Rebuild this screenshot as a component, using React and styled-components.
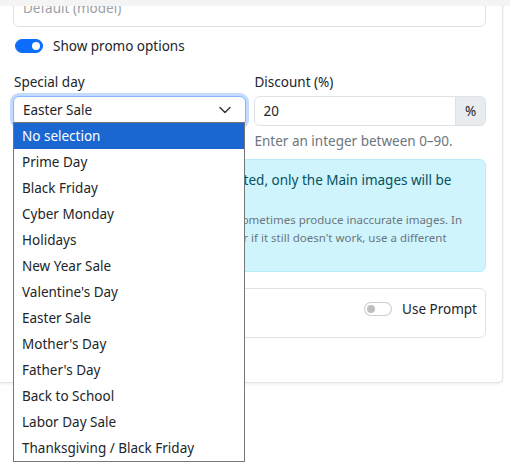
import React, { useState } from 'react'
import styled, { createGlobalStyle } from 'styled-components'

const GlobalStyle = createGlobalStyle`
	html, body { height: 100%; }
	body {
		margin: 0;
		background: #fff;
		font-family: 'Noto Sans', 'Noto Sans CJK KR', sans-serif;
		font-size: 13.5px;
		color: #212529;
		overflow: hidden;
	}
	#root { min-height: 100%; }
	* { box-sizing: border-box; }
`

const TopStrip = styled.div`
	position: fixed;
	top: 0;
	left: 0;
	right: 0;
	height: 6px;
	background: #f4f4f4;
	z-index: 5;
`

const Page = styled.div`
	min-height: 474px;
`

const Card = styled.div`
	width: 507px;
	margin-left: -4px;
	padding: 0 16px 44px;
	background: #fff;
	border: 1px solid #e3e3e3;
	border-top: none;
	border-radius: 0 0 5px 5px;
	box-shadow: 0 1px 3px rgba(0, 0, 0, 0.08);
	display: flex;
	flex-direction: column;
`

const TextInput = styled.input`
	width: 100%;
	height: 38px;
	padding: 0 9px;
	font: inherit;
	color: #212529;
	border: 1px solid #dee2e6;
	border-radius: 6px;
	margin-top: -11px;
	&::placeholder { color: #9aa0a6; }
`

const SwitchRow = styled.label`
	display: flex;
	align-items: center;
	gap: 10px;
	height: 20px;
	margin-top: ${p => p.$mt || 0}px;
	margin-left: ${p => p.$ml || 0}px;
	line-height: 20px;
	white-space: nowrap;
`

const Switch = styled.span`
	position: relative;
	width: 28px;
	height: 14px;
	border-radius: 7px;
	flex: none;
	background: ${p => p.$on ? '#0d6efd' : '#fff'};
	border: 1px solid ${p => p.$on ? '#0d6efd' : 'rgba(0,0,0,0.2)'};
	&::after {
		content: '';
		position: absolute;
		top: 2px;
		left: ${p => p.$on ? '16px' : '2px'};
		width: 8px;
		height: 8px;
		border-radius: 50%;
		background: ${p => p.$on ? '#fff' : '#bfbfbf'};
	}
`

const Grid = styled.div`
	display: grid;
	grid-template-columns: minmax(0, 1fr) minmax(0, 1fr);
	gap: 8px;
	margin-top: 16px;
`

const Field = styled.div`
	position: relative;
	display: flex;
	flex-direction: column;
	min-width: 0;
`

const Label = styled.div`
	line-height: 20px;
	margin-bottom: 4px;
	padding-left: 1px;
`

const SelectBox = styled.div`
	height: 30px;
	display: flex;
	align-items: center;
	justify-content: space-between;
	padding: 0 14px 2px 9px;
	border: 1px solid #86b7fe;
	border-radius: 6px;
	box-shadow: 0 0 0 3px rgba(13, 110, 253, 0.25);
	background: #fff;
`

const InputGroup = styled.div`
	display: flex;
	height: 30px;
`

const GroupInput = styled.input`
	flex: 1;
	width: 0;
	min-width: 0;
	padding: 0 9px;
	font: inherit;
	color: #212529;
	border: 1px solid #dee2e6;
	border-radius: 6px 0 0 6px;
`

const Addon = styled.span`
	width: 30px;
	flex: none;
	display: flex;
	align-items: center;
	justify-content: center;
	background: #e9ecef;
	border: 1px solid #dee2e6;
	border-left: none;
	border-radius: 0 6px 6px 0;
`

const Help = styled.div`
	margin-top: 5px;
	padding-left: 1px;
	line-height: 20px;
	color: #6c757d;
`

const Alert = styled.div`
	margin-top: 8px;
	padding: 10px 16px 6px;
	background: #cff4fc;
	border: 1px solid #b6effb;
	border-radius: 6px;
	color: #055160;
`

const AlertLead = styled.p`
	margin: 0;
	font-size: 13.5px;
	line-height: 20px;
	white-space: nowrap;
`

const AlertNote = styled.p`
	margin: 1px 0 0;
	font-size: 11.5px;
	line-height: 18px;
	color: #6c757d;
	white-space: nowrap;
`

const PromptBox = styled.div`
	margin-top: 16px;
	padding: 10px 8px 18px 16px;
	border: 1px solid #dee2e6;
	border-radius: 6px;
	display: flex;
	justify-content: space-between;
`

const Menu = styled.ul`
	position: absolute;
	top: 50px;
	left: 0;
	width: 232px;
	margin: 0;
	padding: 0;
	list-style: none;
	background: #fff;
	border: 1px solid #767676;
	z-index: 3;
`

const Option = styled.li`
	height: 26px;
	line-height: 26px;
	padding-left: 8px;
	white-space: nowrap;
	background: ${p => p.$active ? '#1a67d2' : '#fff'};
	color: ${p => p.$active ? '#fff' : '#212529'};
`

const Chevron = () => (
	<svg width="12" height="8" viewBox="0 0 12 8" fill="none">
		<path d="M1 1.5 6 6.5 11 1.5" stroke="#343a40" strokeWidth="1.5" strokeLinecap="round" strokeLinejoin="round" />
	</svg>
)

const days = [
	'No selection', 'Prime Day', 'Black Friday', 'Cyber Monday', 'Holidays',
	'New Year Sale', "Valentine's Day", 'Easter Sale', "Mother's Day",
	"Father's Day", 'Back to School', 'Labor Day Sale', 'Thanksgiving / Black Friday',
]

const App = () => {
	const [discount, setDiscount] = useState('20')
	return (
		<Page>
			<GlobalStyle />
			<TopStrip />
			<Card>
				<TextInput placeholder="Default (model)" />
				<SwitchRow $mt={9} $ml={2}>
					<Switch $on />
					Show promo options
				</SwitchRow>
				<Grid>
					<Field>
						<Label>Special day</Label>
						<SelectBox>
							<span>Easter Sale</span>
							<Chevron />
						</SelectBox>
						<Menu>
							{days.map((d, i) => <Option key={d} $active={i === 0}>{d}</Option>)}
						</Menu>
					</Field>
					<Field>
						<Label>Discount (%)</Label>
						<InputGroup>
							<GroupInput value={discount} onChange={e => setDiscount(e.target.value)} />
							<Addon>%</Addon>
						</InputGroup>
						<Help>Enter an integer between 0–90.</Help>
					</Field>
				</Grid>
				<Alert>
					<AlertLead>When any special sale day is selected, only the Main images will be<br />regenerated.</AlertLead>
					<AlertNote>Please note that these AI models may sometimes produce inaccurate images. In<br />that case, please try it one more time, or if it still doesn't work, use a different<br />model.</AlertNote>
				</Alert>
				<PromptBox>
					<span>Prompt</span>
					<SwitchRow>
						<Switch />
						Use Prompt
					</SwitchRow>
				</PromptBox>
			</Card>
		</Page>
	)
}

export default App
